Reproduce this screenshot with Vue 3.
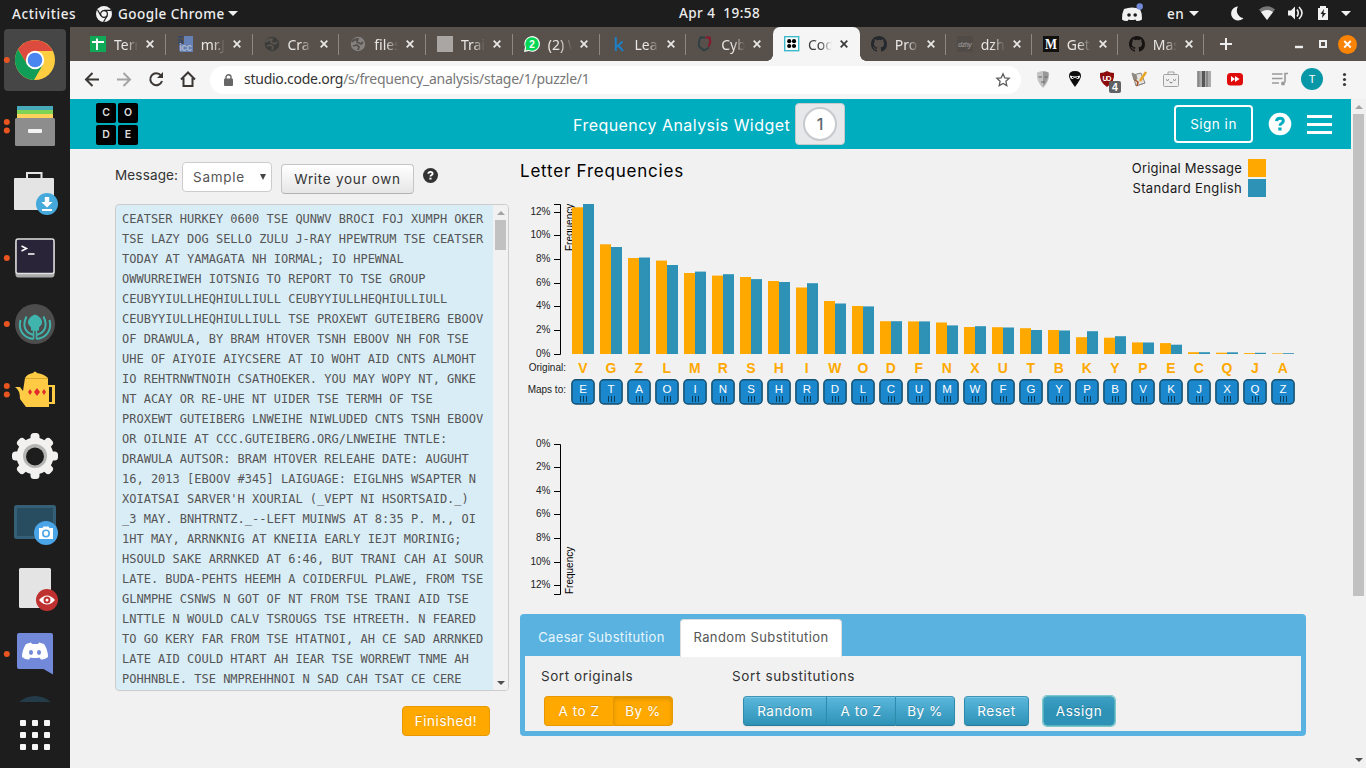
<script setup>
const tabs = [
  { t: 'Terr', i: 'sheets' }, { t: 'mr.J', i: 'icc' }, { t: 'Cra', i: 'globe' },
  { t: 'files', i: 'globe2' }, { t: 'Trai', i: 'blank' }, { t: '(2) W', i: 'whats' },
  { t: 'Lea', i: 'k' }, { t: 'Cyb', i: 'cyber' }, { t: 'Cod', i: 'code', active: true },
  { t: 'Pro', i: 'github', n: true }, { t: 'dzh', i: 'dzhy', n: true },
  { t: 'Get', i: 'medium', n: true }, { t: 'Mas', i: 'github', n: true, b: true }
]
const text = [
  'CEATSER HURKEY 0600 TSE QUNWV BROCI FOJ XUMPH OKER',
  'TSE LAZY DOG SELLO ZULU J-RAY HPEWTRUM TSE CEATSER',
  'TODAY AT YAMAGATA NH IORMAL; IO HPEWNAL',
  'OWWURREIWEH IOTSNIG TO REPORT TO TSE GROUP',
  'CEUBYYIULLHEQHIULLIULL CEUBYYIULLHEQHIULLIULL',
  'CEUBYYIULLHEQHIULLIULL TSE PROXEWT GUTEIBERG EBOOV',
  'OF DRAWULA, BY BRAM HTOVER TSNH EBOOV NH FOR TSE',
  'UHE OF AIYOIE AIYCSERE AT IO WOHT AID CNTS ALMOHT',
  'IO REHTRNWTNOIH CSATHOEKER. YOU MAY WOPY NT, GNKE',
  'NT ACAY OR RE-UHE NT UIDER TSE TERMH OF TSE',
  'PROXEWT GUTEIBERG LNWEIHE NIWLUDED CNTS TSNH EBOOV',
  'OR OILNIE AT CCC.GUTEIBERG.ORG/LNWEIHE TNTLE:',
  'DRAWULA AUTSOR: BRAM HTOVER RELEAHE DATE: AUGUHT',
  '16, 2013 [EBOOV #345] LAIGUAGE: EIGLNHS WSAPTER N',
  "XOIATSAI SARVER'H XOURIAL (_VEPT NI HSORTSAID._)",
  '_3 MAY. BNHTRNTZ._--LEFT MUINWS AT 8:35 P. M., OI',
  '1HT MAY, ARRNKNIG AT KNEIIA EARLY IEJT MORINIG;',
  'HSOULD SAKE ARRNKED AT 6:46, BUT TRANI CAH AI SOUR',
  'LATE. BUDA-PEHTS HEEMH A COIDERFUL PLAWE, FROM TSE',
  'GLNMPHE CSNWS N GOT OF NT FROM TSE TRANI AID TSE',
  'LNTTLE N WOULD CALV TSROUGS TSE HTREETH. N FEARED',
  'TO GO KERY FAR FROM TSE HTATNOI, AH CE SAD ARRNKED',
  'LATE AID COULD HTART AH IEAR TSE WORREWT TNME AH',
  'POHHNBLE. TSE NMPREHHNOI N SAD CAH TSAT CE CERE'
].join('\n')
const bars = [
  ['V', 'E', 146.7, 150], ['G', 'T', 109.7, 107], ['Z', 'A', 96, 96.5], ['L', 'O', 93.4, 89], ['M', 'I', 81, 82.4],
  ['R', 'N', 78.4, 79.8], ['S', 'S', 77, 74.9], ['H', 'H', 73, 72], ['I', 'R', 66.5, 70.8], ['W', 'D', 53, 50.5],
  ['O', 'L', 48, 47.6], ['D', 'C', 32.8, 32.8], ['F', 'U', 32.6, 32.6], ['N', 'M', 31.5, 28.6], ['X', 'W', 27, 27.8],
  ['U', 'F', 26.8, 26.5], ['T', 'G', 25.8, 24], ['B', 'Y', 24, 23.5], ['K', 'P', 16.8, 22.8], ['Y', 'B', 16.3, 17.8],
  ['P', 'V', 11.6, 11.5], ['E', 'K', 10.9, 9.3], ['C', 'J', 1.8, 1.8], ['Q', 'X', 1.3, 1.7], ['J', 'Q', 0.9, 1.2], ['A', 'Z', 0.6, 0.8]
]
const ticks = [0, 2, 4, 6, 8, 10, 12]
const tickTop = t => Math.floor(354 - t * 11.82) + 0.5
const tickBottom = t => Math.floor(444 + t * 11.82) + 0.5
</script>

<template>
  <div class="screen">
    <div class="topbar">
      <span class="act">Activities</span>
      <svg class="tchrome" width="16" height="16" viewBox="0 0 16 16"><circle cx="8" cy="8" r="8" fill="#f2f2f2"/><circle cx="8" cy="8" r="3.4" fill="#f2f2f2" stroke="#1d1d1d" stroke-width="1.2"/><path d="M8 4.4h7M4.9 9.7L1.6 4M11.2 9.7L7.6 15.8" stroke="#1d1d1d" stroke-width="1.2"/></svg>
      <span class="gc">Google Chrome</span>
      <i class="caret"></i>
      <span class="clock">Apr 4&nbsp; 19:58</span>
      <svg class="tray" width="260" height="27" viewBox="1106 0 260 27">
        <path d="M1124 9q8-3 16 0q2.500 5 2 10.500q-3 2-5.500 1.500l-1-1.500q-3.500 1-7 0l-1 1.500q-3 .5-5.500-1.500q-.5-5.500 2-10.500z" fill="#f2f2f2"/><circle cx="1129" cy="15" r="1.800" fill="#1d1d1d"/><circle cx="1135.200" cy="15" r="1.800" fill="#1d1d1d"/><circle cx="1139.700" cy="6.500" r="3.200" fill="#7289da"/>
        <path d="M1189 11h10l-5 5zM1341 11h10l-5 5z" fill="#f2f2f2"/>
        <path d="M1238 6.500a7 7 0 1 0 5.500 11.500a7.500 7.500 0 0 1-5.500-11.500z" fill="#f2f2f2"/>
        <path d="M1259 9.500q8-6.500 16 0l-8 10.500z" fill="#777"/><path d="M1261 12q6-4 12 0l-6 8z" fill="#f2f2f2"/>
        <path d="M1288 10.500h3l4-4v13l-4-4h-3z" fill="#f2f2f2"/><path d="M1297 9.500q2.500 3.500 0 7M1299 7q6 6 0 12" stroke="#f2f2f2" stroke-width="1.600" fill="none"/>
        <path d="M1318 8h2V6h6v2h2v12h-10z" fill="#f2f2f2"/><path d="M1324 9l-3.500 5h2l-.5 4 4-5h-2.500z" fill="#1d1d1d"/>
      </svg>
      <span class="lang">en</span>
    </div>
    <div class="main">
      <svg class="dock" width="70" height="741" viewBox="0 27 70 741">
        <rect x="4" y="29" width="62" height="62" rx="4" fill="#464646"/>
        <g fill="#e95420"><circle v-for="y in [60, 122, 130.500, 258, 324, 386, 394.500, 654]" :key="y" cx="6.800" :cy="y" r="3"/></g>
        <circle cx="35" cy="60" r="20" fill="#ffcd40"/><path d="M35 51H52.700A20 20 0 0 0 18 49.500L27 64z" fill="#dd4b3e"/><path d="M18 49.500A20 20 0 0 0 34 80L43 64.500L35 68L27 64z" fill="#109d58"/><circle cx="35" cy="60" r="9.200" fill="#fff"/><circle cx="35" cy="60" r="7.300" fill="#4a86f0"/>
        <path d="M17 106h36v4H17z" fill="#48a9b9"/><path d="M17 110h36v4H17z" fill="#7ed254"/><path d="M17 114h36v5H17z" fill="#ffd35b"/><rect x="15" y="118" width="40" height="28" rx="1.500" fill="#8d8d8d"/><rect x="28" y="129" width="14" height="4" rx="1" fill="#f2f2f2"/>
        <path d="M27 179v-6h14.500v6" fill="none" stroke="#e5e5e5" stroke-width="2"/><rect x="14" y="178" width="40" height="32" rx="1" fill="#e4e4e4"/><circle cx="47" cy="204" r="11" fill="#46a9dc"/><path d="M44.800 197h4.400v5h3.500L47 207.500 41.300 202h3.500zM42 209h10v2H42z" fill="#fff"/>
        <rect x="15.500" y="240" width="39" height="37.500" rx="3" fill="#aaa"/><rect x="16" y="239" width="38" height="34.500" rx="2" fill="#2a2438" stroke="#e2e0e0" stroke-width="1.500"/><path d="M21.500 246l5 2.500-5 2.500M28 254h6.500" stroke="#fff" stroke-width="1.500" fill="none"/>
        <circle cx="35" cy="324" r="20" fill="#4d4d4d"/><path d="M35 314.500c-5 2-8.500 6-6.500 10l2.500 3v3h8v-3l2.500-3c2-4-1.500-8-6.500-10z" fill="#3fb5ae"/><g fill="none" stroke="#3fb5ae" stroke-width="2"><path d="M33.500 339C23 337.500 18 330 20.500 320M36.500 339C47 337.500 52 330 49.500 320M33.500 335C25 332.500 22 326 26.500 316.500M36.500 335C45 332.500 48 326 43.500 316.500M33.800 329v10M36.200 329v10"/></g><path d="M35 331v9" stroke="#4d4d4d" stroke-width="1.200"/>
        <path d="M25 378q2-4 8-5q2-3 4 0q7 1 11 5v7h7v19h-6v3H26l-6-8q0-9-5-12h5l3 4z" fill="#ffcb45"/><path d="M49 387h3v15h-3z" fill="#1d1d1d"/><path d="M25 378.500h23" stroke="#d7a930"/><path d="M30 389l2 3-2 3-2-3zM37 388l3 4-3 4-3-4zM44 389l2 3-2 3-2-3z" fill="#e02b28"/>
        <g fill="#f2f1ef"><rect v-for="a in [0,45,90,135]" :key="a" x="30.500" y="433" width="9" height="46" rx="3.500" :transform="`rotate(${a} 35 456)`"/><circle cx="35" cy="456" r="18.500"/></g><circle cx="35" cy="456" r="12" fill="#b5b5b3"/><circle cx="35" cy="456.500" r="9" fill="#1d1d1d"/>
        <rect x="15.500" y="506.500" width="39" height="31" rx="1" fill="#294d60" stroke="#345f76" stroke-width="3"/><circle cx="46" cy="533" r="12" fill="#4aa4e8"/><path d="M39 528h3.500l1-1.500h5l1 1.500H53v11H39z" fill="#fff"/><circle cx="46" cy="533.500" r="3.200" fill="none" stroke="#4aa4e8" stroke-width="1.600"/>
        <rect x="19" y="568" width="32" height="40" rx="1.500" fill="#e4e4e4"/><circle cx="47" cy="600" r="11" fill="#bf3030"/><path d="M39 600q8-9 16 0q-8 9-16 0z" fill="#fff"/><circle cx="47" cy="600" r="2.500" fill="#fff" stroke="#bf3030" stroke-width="2"/>
        <path d="M19 633h32q2 0 2 2v39.500L43.500 669H19q-2 0-2-2v-32q0-2 2-2z" fill="#7289da"/><path d="M26 644l5-1.500 1 1.500h6l1-1.500 5 1.500q4 6 4 13q-4 3-7 2.500l-1.500-2q-4.500 1-9 0l-1.500 2q-3 .5-7-2.500q0-7 4-13z" fill="#fff"/><ellipse cx="31" cy="652.500" rx="2" ry="2.400" fill="#7289da"/><ellipse cx="39" cy="652.500" rx="2" ry="2.400" fill="#7289da"/>
        <path d="M19 702q7-6 16-6t16 6z" fill="#243c49"/>
        <g fill="#f6f6f6"><template v-for="y in [720,732,744]" :key="y"><rect v-for="x in [20,32,44]" :key="x" :x="x" :y="y" width="6" height="6" rx="1"/></template></g>
      </svg>
      <div class="browser">
        <div class="tabs">
          <div v-for="(t, n) in tabs" :key="n" class="tab" :class="{ active: t.active, narrow: t.n, nosep: n === 7 }">
            <svg width="16" height="16" viewBox="0 0 16 16">
              <template v-if="t.i === 'sheets'"><rect width="16" height="16" rx="1" fill="#0eaa57"/><path d="M2 6h12M7 2.500v11.500" stroke="#fff" stroke-width="1.900"/></template>
              <template v-else-if="t.i === 'icc'"><path d="M7 0h9v16H3V8h4z" fill="#6581b5"/><path d="M1 1h5M1 4h3M5 4v4M1 7h4" stroke="#31456e" stroke-width="1.500"/><text x="2" y="15" font-size="10" font-weight="700" fill="#aab6cc" textLength="13">icc</text></template>
              <template v-else-if="t.i === 'globe' || t.i === 'globe2'"><circle cx="8" cy="8" r="7.200" :fill="t.i === 'globe' ? '#3c3c3b' : '#858381'"/><path d="M2 6q2-3 6-3l-1 3 4 2 2-2M3 10l4-1 2 2-1 3" :stroke="t.i === 'globe' ? '#5b5550' : '#57504b'" stroke-width="1.800" fill="none"/></template>
              <rect v-else-if="t.i === 'blank'" width="16" height="16" fill="#a9a6a3"/>
              <template v-else-if="t.i === 'whats'"><path d="M0 16l1-5A7.800 7.800 0 1 1 5 15z" fill="#fff"/><circle cx="8" cy="8" r="6.800" fill="#06d755"/><path d="M1.500 14.500l1-4 3 3z" fill="#06d755"/><text x="8" y="11.500" text-anchor="middle" font-size="10" font-weight="700" fill="#fff">2</text></template>
              <path v-else-if="t.i === 'k'" d="M4.800 1v14M11.500 5.500L5.500 11M7 9l5 6" stroke="#1d7fc4" stroke-width="2" fill="none"/>
              <template v-else-if="t.i === 'cyber'"><path d="M3.500 1L2 5.500v5L7 14.500l5-3" stroke="#2e3f44" stroke-width="1.800" fill="none"/><path d="M3 1.500h5" stroke="#2e3f44" stroke-width="2"/><path d="M8.500 1.500h4l.8 4-1.500 5" stroke="#87172d" stroke-width="2" fill="none"/></template>
              <template v-else-if="t.i === 'code'"><rect x=".7" y=".7" width="14" height="14" fill="#fff" stroke="#3cb9cb" stroke-width="1.400"/><g fill="#000"><circle cx="5.200" cy="5.200" r="2.100"/><circle cx="10" cy="5.200" r="2.100"/><circle cx="5.200" cy="10" r="2.100"/><circle cx="10" cy="10" r="2.100"/></g></template>
              <path v-else-if="t.i === 'github'" :fill="t.b ? '#171312' : '#25292e'" d="M8 0C3.580 0 0 3.580 0 8c0 3.540 2.290 6.530 5.470 7.590.4.070.55-.17.55-.38 0-.19-.01-.82-.01-1.490-2.010.37-2.530-.49-2.690-.94-.09-.23-.48-.94-.82-1.130-.28-.15-.68-.52-.01-.53.63-.01 1.080.58 1.230.82.72 1.210 1.870.87 2.330.66.070-.52.28-.87.51-1.070-1.780-.2-3.640-.89-3.640-3.950 0-.87.31-1.590.82-2.150-.08-.2-.36-1.020.08-2.120 0 0 .67-.21 2.200.82a7.600 7.600 0 0 1 4 0c1.530-1.040 2.200-.82 2.200-.82.44 1.100.16 1.920.08 2.120.51.56.82 1.270.82 2.150 0 3.070-1.870 3.750-3.650 3.950.29.25.54.73.54 1.480 0 1.070-.01 1.930-.01 2.200 0 .21.150.46.55.38A8 8 0 0 0 16 8c0-4.420-3.580-8-8-8z"/>
              <template v-else-if="t.i === 'dzhy'"><rect width="16" height="16" fill="#514b48"/><text x="1" y="10.500" font-size="7" font-style="italic" font-weight="700" fill="#8b8784" textLength="14">dzhy</text></template>
              <template v-else><rect width="16" height="16" fill="#12110f"/><text class="serif" x="8" y="13" text-anchor="middle" font-weight="700" font-size="14" fill="#fff" textLength="12" lengthAdjust="spacingAndGlyphs">M</text></template>
            </svg>
            <span class="tt">{{ t.t }}</span>
            <svg class="x" width="8" height="8" viewBox="0 0 8 8"><path d="M.7.7l6.600 6.600M7.300.7L.7 7.300" stroke="currentColor" stroke-width="1.800"/></svg>
          </div>
          <svg class="wctl" width="162" height="34" viewBox="1204 27 162 34"><path d="M1220 44h12M1226 38v12" stroke="#eee" stroke-width="2"/><path d="M1295 47h8" stroke="#eee" stroke-width="2.400"/><rect x="1320" y="41" width="6" height="6" fill="none" stroke="#eee" stroke-width="2"/><circle cx="1347.500" cy="44.500" r="9.500" fill="#f98306"/><path d="M1344.200 41l6.500 6.500M1350.700 41l-6.500 6.500" stroke="#fff" stroke-width="1.900"/></svg>
        </div>
        <div class="toolbar">
          <svg class="nav" width="140" height="38" viewBox="70 61 140 38" fill="none" stroke="#3b3735" stroke-width="2"><path d="M99 79.500H86.500M92.500 73l-6.500 6.500 6.500 6.500"/><path d="M117 79.500h12.500M123.500 73l6.500 6.500-6.500 6.500" stroke="#a6a4a3"/><path d="M161 75.500a6 6 0 1 0 1 5.500"/><path d="M163 72v6h-6z" fill="#3b3735" stroke="none"/><path d="M181 79.500l7-7 7 7M183.500 78v8h9v-8"/></svg>
          <div class="omni">
            <svg width="9" height="12" viewBox="0 0 9 12"><rect y="4.500" width="9" height="7.500" rx="1" fill="#666"/><path d="M2 5V3a2.500 2.200 0 0 1 5 0v2" fill="none" stroke="#666" stroke-width="1.400"/></svg>
            <span class="url"><b>studio.code.org</b>/s/frequency_analysis/stage/1/puzzle/1</span>
            <svg class="star" width="16" height="16" viewBox="0 0 16 16"><path d="M8 1.800l1.800 4 4.400.5-3.300 3 .9 4.300L8 11.400l-3.800 2.200.9-4.300-3.300-3 4.400-.5z" fill="none" stroke="#5d5d5d" stroke-width="1.300"/></svg>
          </div>
          <svg class="ext" width="345" height="38" viewBox="1021 61 345 38">
            <path d="M1037 72.500q6-3 12 0q1 9-6 15.500q-7-6.500-6-15.500z" fill="#c4c4c4"/><path d="M1043 71.500q5-.5 5.500 2q0 7-5.500 13z" fill="#999"/><path d="M1038.500 77h3.500M1044.500 77h3M1041 82h4" stroke="#666" stroke-width="1.200"/>
            <path d="M1069 76q0-5 6-5t6 5q0 3-6 11q-6-8-6-11z" fill="#0c0c0c"/><path d="M1070 75.500q5 2 10 0q0 3.500-2.500 3.500l-2.500-1.500-2.500 1.500q-2.500 0-2.500-3.500z" fill="#fff"/><path d="M1072 77.500h1.500M1076.500 77.500h1.500" stroke="#000"/>
            <path d="M1100 73q4 0 7-2q3 2 7 2q1 9-7 14q-8-5-7-14z" fill="#8d0b0b"/><text x="1102.500" y="81" font-size="7" font-weight="700" fill="#fff" textLength="9">UO</text><rect x="1109" y="81" width="12" height="12" rx="2" fill="#5f6163"/><text x="1115" y="91" text-anchor="middle" font-size="10.500" font-weight="700" fill="#fff">4</text>
            <path d="M1133 75l8-2 4 10-9 3z" fill="#e4e2df" stroke="#88837c"/><path d="M1132 73l4 2 1 4-3 1zM1139 85l6-2" fill="#8e8981" stroke="#8e8981"/><path d="M1146 72l-6 9" stroke="#e7a323" stroke-width="2.400"/><path d="M1135 80l3 2-1 4" stroke="#a34d24" stroke-width="1.500" fill="none"/>
            <rect x="1163.500" y="74.500" width="15" height="12" rx="1" fill="#f0f0f0" stroke="#a0a0a0"/><path d="M1168 74v-2h6v2" stroke="#a0a0a0" fill="none"/><path d="M1166 79.500l1.500 1 1.500-1M1173 79.500l1.500 1 1.500-1M1169.500 82l1.500 1 1.500-1" stroke="#777" fill="none"/>
            <path d="M1197 71h14v16h-14z" fill="#aaa"/><path d="M1198.500 71v16M1207 71v16" stroke="#888" stroke-width="2"/><path d="M1203.500 71v16" stroke="#555" stroke-width="3"/>
            <rect x="1227" y="73" width="16" height="12.500" rx="3.500" fill="#e00b0b"/><path d="M1231 76l4 3-4 3zM1235 76l4.500 3-4.500 3z" fill="#fff"/>
            <path d="M1272 74h10.500M1272 78.500h10.500M1272 83h7M1288 73.500h-3v9" stroke="#999" stroke-width="1.600" fill="none"/><circle cx="1283" cy="83.500" r="2" fill="#999"/>
            <circle cx="1312" cy="79" r="11" fill="#0897a7"/><text x="1312" y="83" text-anchor="middle" font-size="11" fill="#fff">T</text>
            <g fill="#3c3c3c"><circle cx="1344.500" cy="74.500" r="1.600"/><circle cx="1344.500" cy="79.500" r="1.600"/><circle cx="1344.500" cy="84.500" r="1.600"/></g>
          </svg>
        </div>
        <div class="viewport">
          <div class="page">
            <div class="header">
              <div class="logo"><i>C</i><i>O</i><i>D</i><i>E</i></div>
              <span class="htitle">Frequency Analysis Widget</span>
              <div class="level"><b>1</b></div>
              <span class="sign">Sign in</span>
              <svg class="hq" width="24" height="24" viewBox="0 0 24 24"><circle cx="12" cy="12" r="11.300" fill="#fff"/><path d="M8.500 9.200q.3-3 3.500-3 3.300 0 3.300 2.800 0 1.300-1.600 2.300-1.700 1-1.700 2.400" fill="none" stroke="#00adbf" stroke-width="3"/><path d="M10.300 15.500h3.300v3h-3.300z" fill="#00adbf"/></svg>
              <div class="burger"><i></i><i></i><i></i></div>
            </div>
            <div class="content">
              <div class="left">
                <div class="ctl">
                  <span class="lab">Message:</span>
                  <span class="select"><em>Sample</em><svg width="6" height="6" viewBox="0 0 6 6"><path d="M0 0h6L3 6z" fill="#444"/></svg></span>
                  <span class="btn grey"><em>Write your own</em></span>
                  <svg class="q" width="15" height="15" viewBox="0 0 24 24"><circle cx="12" cy="12" r="12" fill="#333"/><path d="M8.500 9.200q.3-3 3.500-3 3.300 0 3.300 2.800 0 1.300-1.600 2.300-1.700 1-1.700 2.400" fill="none" stroke="#fff" stroke-width="3"/><path d="M10.300 15.500h3.300v3h-3.300z" fill="#fff"/></svg>
                </div>
                <div class="box"><pre>{{ text }}</pre><div class="sb"><i class="up"></i><b></b><i class="down"></i></div></div>
                <span class="btn orange fin"><em>Finished!</em></span>
              </div>
              <div class="right">
                <div class="ch">
                  <span class="ct">Letter Frequencies</span>
                  <div class="legend"><p><span class="l1">Original Message</span><i></i></p><p><span class="l2">Standard English</span><i class="bl"></i></p></div>
                </div>
                <svg class="chart" width="786" height="410" viewBox="520 200 786 410">
                  <g font-size="10" fill="#222" text-anchor="end">
                    <text v-for="t in ticks" :key="t" x="550.500" :y="tickTop(t) + 2.500">{{ t }}%</text>
                    <text v-for="t in ticks" :key="'b' + t" x="550.500" :y="tickBottom(t) + 2.500">{{ t }}%</text>
                    <text x="566" y="371">Original:</text><text x="566" y="393">Maps to:</text>
                  </g>
                  <text transform="translate(573 251) rotate(-90)" font-size="10" fill="#000">Frequency</text>
                  <text transform="translate(573 594) rotate(-90)" font-size="10" fill="#000">Frequency</text>
                  <g stroke="#000" fill="none">
                    <path d="M554 204.500h6.500v150h-6.500M554 444.500h6.500v150h-6.500"/>
                    <template v-for="t in ticks" :key="t"><path v-if="t" :d="`M554 ${tickTop(t)}h6M554 ${tickBottom(t)}h6`"/></template>
                  </g>
                  <g v-for="(b, n) in bars" :key="n" :transform="`translate(${572 + n * 28} 0)`">
                    <rect x="0" :y="354 - b[2]" width="11" :height="b[2]" fill="#ffa900"/>
                    <rect x="11" :y="354 - b[3]" width="11" :height="b[3]" fill="#2d92b6"/>
                    <text transform="translate(10.800 373) scale(.93 1)" text-anchor="middle" font-size="15" font-weight="700" fill="#ffa900">{{ b[0] }}</text>
                    <rect x="-.1" y="379.800" width="22.200" height="24.200" rx="4" fill="#1b87cc" stroke="#15506f" stroke-width="1.500"/>
                    <text x="11" y="393" text-anchor="middle" font-size="11.500" fill="#fff">{{ b[1] }}</text>
                    <path d="M8.500 396v6M11.500 396v6M14.500 396v6" stroke="#0d3e5c"/>
                  </g>
                </svg>
                <div class="panel">
                  <div class="ptabs"><span class="p1"><em>Caesar Substitution</em></span><span class="p2"><em>Random Substitution</em></span></div>
                  <div class="pbody">
                    <div class="so"><span class="so-l">Sort originals</span><div class="grp"><span class="btn orange w69"><em>A to Z</em></span><span class="btn orange w60 on"><em>By %</em></span></div></div>
                    <div class="ss"><span class="ss-l">Sort substitutions</span><div class="row"><div class="grp"><span class="btn blue w84"><em>Random</em></span><span class="btn blue w68"><em>A to Z</em></span><span class="btn blue w60"><em>By %</em></span></div><span class="btn blue w65"><em>Reset</em></span><span class="btn blue w74 on"><em>Assign</em></span></div></div>
                  </div>
                </div>
              </div>
            </div>
          </div>
          <div class="scroll"><i class="up"></i><b></b><i class="down"></i></div>
        </div>
      </div>
    </div>
  </div>
</template>

<style>
html, body { overflow: hidden; background: #f1f1f1; }
</style>
<style scoped>
* { box-sizing: border-box; }
i, em, b { font-style: normal; }
svg { display: block; flex: none; }
svg text { font-family: "Liberation Sans", Arial, sans-serif; }
svg text.serif { font-family: "Liberation Serif", serif; }
.screen { width: 1366px; height: 768px; font-family: "Noto Sans", sans-serif; background: #f1f1f1; overflow: hidden; display: flex; flex-direction: column; }
.topbar { height: 27px; background: #1d1d1d; color: #eee; font-size: 13.500px; font-weight: 500; letter-spacing: .45px; display: flex; align-items: center; position: relative; white-space: nowrap; }
.act { margin-left: 12px; width: 84px; letter-spacing: .6px; }
.gc { margin-left: 6px; width: 111px; }
.caret { border: 5px solid transparent; border-top-color: #eee; border-bottom: 0; margin-left: -1px; }
.clock { position: absolute; left: 679px; top: 4px; }
.tray { position: absolute; right: 0; top: 0; }
.lang { position: absolute; left: 1167px; }
.main { flex: 1; display: flex; min-height: 0; }
.dock { background: #1d1d1d; }
.browser { width: 1296px; display: flex; flex-direction: column; }
.tabs { height: 34px; background: #57504b; display: flex; padding-left: 9px; }
.tab { width: 86.750px; display: flex; align-items: center; padding-left: 11px; color: #e8e6e4; position: relative; flex: none; }
.tab.narrow { width: 86px; }
.tab::after { content: ''; position: absolute; right: 0; top: 7px; height: 21px; width: 1px; background: #8c8783; }
.tab.active::after, .tab.nosep::after { display: none; }
.tab.active { background: #f5f5f5; color: #3c3c3c; border-radius: 7px 7px 0 0; }
.tab.active::before { content: ''; position: absolute; left: -6px; right: -6px; bottom: 0; height: 6px; background: radial-gradient(circle at 0 0, transparent 5.500px, #f5f5f5 6px) left / 6px 6px no-repeat, radial-gradient(circle at 100% 0, transparent 5.500px, #f5f5f5 6px) right / 6px 6px no-repeat; }
.tt { width: 24px; margin-left: 8px; overflow: hidden; font-size: 14px; line-height: 19px; white-space: nowrap; -webkit-mask-image: linear-gradient(90deg, #000 50%, transparent); mask-image: linear-gradient(90deg, #000 50%, transparent); }
.x { margin-left: 8px; }
.toolbar { height: 38px; background: #f5f5f5; display: flex; align-items: center; }
.omni { width: 811px; height: 28px; margin-top: -1px; background: #fff; border-radius: 14px; display: flex; align-items: center; padding: 0 10px 0 14px; }
.url { margin: -2px 0 0 11px; font-size: 14px; color: #777; white-space: nowrap; letter-spacing: -.26px; }
.url b { color: #333; font-weight: 400; }
.star { margin-left: auto; }
.viewport { flex: 1; display: flex; min-height: 0; font-family: Inter, sans-serif; }
.page { width: 1281px; }
.header { height: 50px; background: #00adbf; color: #fff; display: flex; align-items: center; padding-left: 26px; white-space: nowrap; }
.logo { display: grid; grid-template-columns: 20px 20px; gap: 2px; width: 42px; }
.logo i { height: 20px; background: #000; border-radius: 2px; font-size: 10.500px; font-weight: 600; line-height: 20px; text-align: center; color: #ddd; }
.htitle { margin-left: 435px; width: 222px; font-size: 16px; letter-spacing: .45px; padding-top: 1px; }
.level { width: 50px; height: 42px; border: 1px solid #c6cacd; border-radius: 4px; background: #e7e8ea; display: flex; align-items: center; justify-content: center; }
.level b { width: 34px; height: 34px; border: 2px solid #c6cacd; border-radius: 50%; background: #fff; color: #5b6770; font-size: 16px; font-weight: 500; line-height: 30px; text-align: center; }
.sign { margin-left: 329px; width: 79px; height: 38px; border: 2px solid #fff; border-radius: 4px; text-align: center; line-height: 35px; font-size: 13.500px; letter-spacing: .5px; }
.hq { margin-left: 15px; }
.burger { margin-left: 15px; width: 25px; display: grid; gap: 5px; }
.burger i { height: 3px; background: #fff; }
.content { display: flex; padding-left: 45px; }
.left { width: 394px; }
.ctl { display: flex; height: 55px; padding-top: 13px; align-items: flex-start; color: #333; font-size: 13.500px; white-space: nowrap; }
.lab { width: 67px; line-height: 26px; letter-spacing: .15px; }
.select { width: 90px; height: 30px; background: #fff; border: 1px solid #ccc; border-radius: 4px; display: flex; align-items: center; justify-content: space-between; padding: 0 5px 0 10px; color: #555; letter-spacing: .75px; }
.btn { display: block; height: 30px; border: 1px solid; border-radius: 4px; text-align: center; line-height: 29px; font-size: 13.500px; letter-spacing: .55px; white-space: nowrap; color: #fff; }
.btn em, .select em { display: inline-block; }
.grey { width: 133px; margin: 2px 0 0 9px; background: linear-gradient(#fff, #e6e6e6); border-color: #c5c5c5 #c5c5c5 #b3b3b3; color: #333; letter-spacing: .7px; }
.q { margin: 6px 0 0 9px; }
.box { height: 487px; border: 1px solid #ccc; border-radius: 4px; background: #d9edf7; display: flex; overflow: hidden; }
pre { margin: 0; width: 377px; padding: 4px 0 0 6px; font: 12px/20px "DejaVu Sans Mono", monospace; color: #555; }
.sb { width: 15px; background: #f1f1f1; display: flex; flex-direction: column; align-items: center; padding: 6px 0 5px; }
.up { border: 4px solid transparent; border-bottom-color: #a3a3a3; border-top: 0; }
.down { border: 4px solid transparent; border-top-color: #505050; border-bottom: 0; margin-top: auto; }
.sb b { width: 11px; height: 30px; margin-top: 5px; background: #c1c1c1; }
.orange { background: #ffa900; border-color: #e69900; text-shadow: 0 -1px 0 rgba(0,0,0,.15); }
.fin { width: 88px; margin: 15px 0 0 287px; }
.right { width: 786px; margin-left: 11px; }
.ch { height: 51px; display: flex; justify-content: space-between; color: #000; white-space: nowrap; }
.ct { font-size: 17px; line-height: 44px; letter-spacing: .78px; }
.legend { padding: 10px 40px 0 0; font-size: 13px; }
.legend p { margin: 0 0 2px; height: 18px; display: flex; justify-content: flex-end; line-height: 19px; color: #1a1a1a; }
.l1 { letter-spacing: .2px; }
.l2 { letter-spacing: .38px; }
.legend i { width: 18px; height: 18px; margin-left: 6px; background: #ffa900; }
.legend .bl { background: #2d92b6; }
.panel { margin-top: 4px; height: 122px; border: 5px solid #59b2df; border-radius: 4px; background: #59b2df; display: flex; flex-direction: column; }
.ptabs { height: 38px; display: flex; font-size: 13px; line-height: 37px; color: #e8f6fd; white-space: nowrap; margin-bottom: -1px; }
.p1 { width: 155px; text-align: center; padding-right: 2px; letter-spacing: .33px; }
.p2 { width: 162px; background: #fff; border: 1px solid #ddd; border-bottom: 0; border-radius: 4px 4px 0 0; text-align: center; color: #555; line-height: 35px; z-index: 1; letter-spacing: .42px; }
.pbody { flex: 1; background: #f1f1f1; display: flex; padding-left: 16px; color: #333; font-size: 13.500px; white-space: nowrap; letter-spacing: .55px; }
.so { width: 191px; }
.so-l, .ss-l { display: block; height: 40px; line-height: 40px; }
.ss-l { letter-spacing: .63px; }
.grp { display: flex; margin-left: 3px; }
.ss .grp { margin-left: 11px; }
.grp .btn { border-radius: 0; border-right-width: 0; }
.grp .btn:first-child { border-radius: 4px 0 0 4px; }
.grp .btn:last-child { border-radius: 0 4px 4px 0; border-right-width: 1px; }
.row { display: flex; }
.blue { background: linear-gradient(#5bb7dc, #2d92b6); border-color: #3d96b8 #2d8bae #28789a; box-shadow: inset 0 1px 0 rgba(255,255,255,.2), 0 1px 2px rgba(0,0,0,.05); text-shadow: 0 -1px 0 rgba(0,0,0,.2); }
.orange.on { box-shadow: inset 0 2px 4px rgba(0,0,0,.15); }
.blue.on { margin-left: 14px; background: linear-gradient(#3d9fc4, #2d92b6 50%); border-color: #52b0bd; box-shadow: 0 0 0 1px #7cc8ce; }
.w69 { width: 69px; }
.w60 { width: 60px; }
.w84 { width: 83px; }
.w68 { width: 69px; }
.w65 { width: 65px; margin-left: 9px; }
.w74 { width: 72px; }
.scroll { width: 15px; background: #f1f1f1; display: flex; flex-direction: column; align-items: center; padding: 6px 0 6px; }
.scroll b { width: 11px; height: 482px; margin-top: 5px; background: #c1c1c1; }
</style>
